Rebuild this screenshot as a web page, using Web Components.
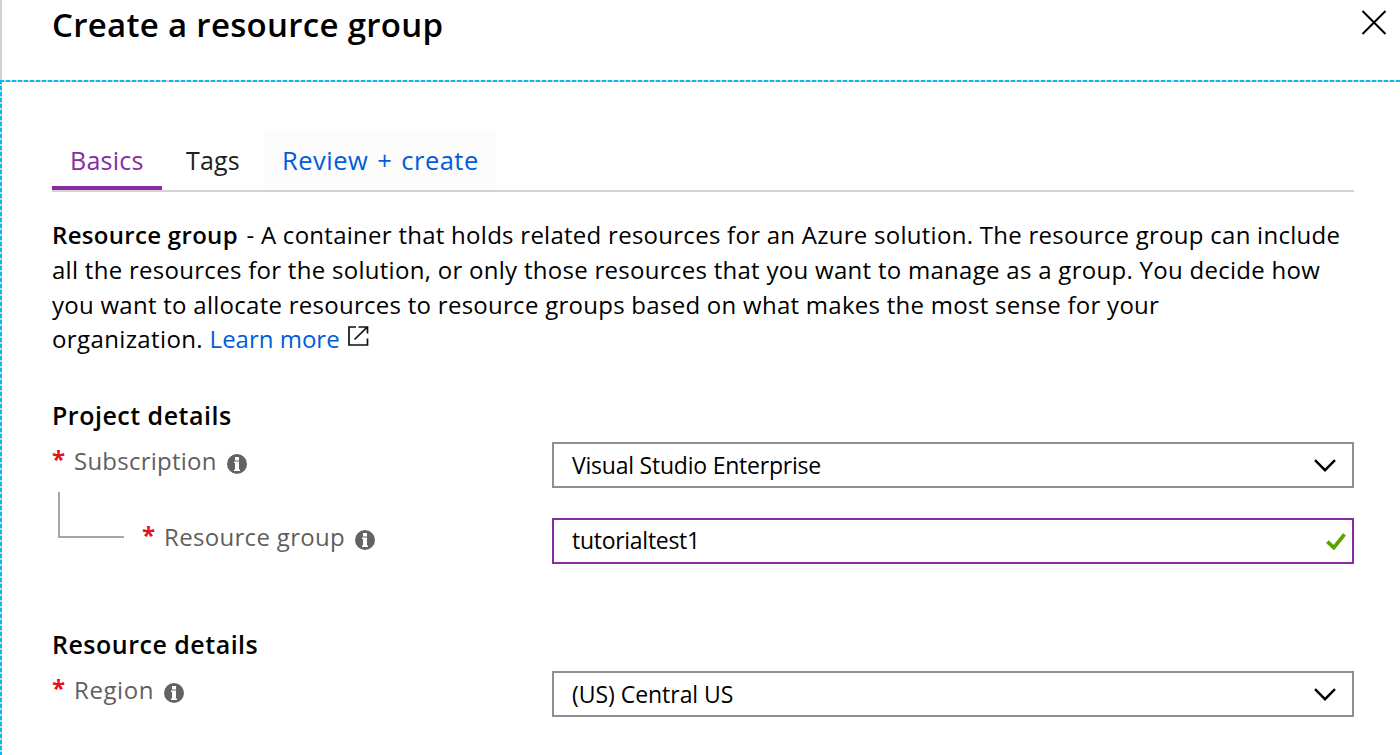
<!DOCTYPE html>
<html lang="en">
<head>
<meta charset="utf-8">
<title>Create a resource group</title>
<style>
html,body{margin:0;height:100%;overflow:hidden;background:#fff}
body{font-family:"Open Sans","Noto Sans",sans-serif;color:#000}
</style>
</head>
<body>
<rg-blade heading="Create a resource group">
  <rg-tabs>
    <rg-tab active style="width:110px;letter-spacing:.25px">Basics</rg-tab>
    <rg-tab style="width:90px;letter-spacing:.2px">Tags</rg-tab>
    <rg-tab highlight style="width:232px;font-size:25.5px;letter-spacing:.5px;word-spacing:1.8px">Review + create</rg-tab>
  </rg-tabs>
  <rg-intro></rg-intro>
  <rg-section heading="Project details">
    <rg-row label="Subscription" style="--ls:.24px"><rg-field icon="chevron" style="--ls:-.22px">Visual Studio Enterprise</rg-field></rg-row>
    <rg-row nested label="Resource group" style="--ls:.32px"><rg-field icon="check" focused style="--ls:-.28px">tutorialtest1</rg-field></rg-row>
  </rg-section>
  <rg-section heading="Resource details">
    <rg-row label="Region" style="--ls:.6px"><rg-field icon="chevron" style="--ls:-.04px">(US) Central US</rg-field></rg-row>
  </rg-section>
</rg-blade>
<script>
const define = (name, render) => customElements.define(name, class extends HTMLElement {
  connectedCallback() {
    if (this.shadowRoot) return;
    this.attachShadow({mode: 'open'}).innerHTML = render(this);
  }
});

define('rg-blade', el => `
<style>
:host{display:flex;flex-direction:column;height:100vh;box-sizing:border-box}
header{flex:none;height:80px;box-sizing:border-box;border-left:2px solid #d2d2d2;padding:0 13px 0 50px;display:flex;justify-content:space-between;align-items:flex-start}
h1{margin:0;font-size:33px;line-height:50px;font-weight:600;letter-spacing:.3px;white-space:nowrap}
svg{display:block;margin-top:10px}
main{flex:1;min-height:0;box-sizing:border-box;padding:50px 46px 0 52px;
background:repeating-linear-gradient(90deg,#00bcf2 0 4px,#d2d2d2 4px 6.018px) 0 0/100% 2px no-repeat,
repeating-linear-gradient(180deg,#00bcf2 0 4px,#d2d2d2 4px 6px) 0 0/2px 100% no-repeat,#fff}
</style>
<header><h1>${el.getAttribute('heading')}</h1>
<svg width="26" height="25" viewBox="0 0 26 25" fill="none" stroke="#000" stroke-width="2"><path d="M1.5 1 24.5 24M24.5 1 1.5 24"/></svg></header>
<main><slot></slot></main>`);

define('rg-tabs', () => `
<style>:host{display:flex;gap:6px;height:60px;border-bottom:2px solid #d2d2d2}</style><slot></slot>`);

define('rg-tab', () => `
<style>
:host{display:block;box-sizing:border-box;height:60px;padding-left:18px;font-size:25px;line-height:60px;color:#1f1f1f;white-space:nowrap}
:host([active]){color:#892ca3;border-bottom:4px solid #892ca3}
:host([highlight]){color:#015cda;background:#fcfcfc}
</style><slot></slot>`);

define('rg-intro', () => `
<style>
:host{display:block;margin-top:26.3px;height:179.4px;font-size:24px;line-height:34.67px;white-space:nowrap}
p{margin:0}
p span,b,a{letter-spacing:var(--s)}
b{font-weight:600}
a{color:#015cda;text-decoration:none}
svg{margin-left:8px;vertical-align:2px}
</style>
<p><b style="--s:.31px">Resource group</b><span style="--s:.268px;margin-left:2px"> - A container that holds related resources for an Azure solution. The resource group can include</span></p>
<p><span style="--s:.285px">all the resources for the solution, or only those resources that you want to manage as a group. You decide how</span></p>
<p><span style="--s:.27px">you want to allocate resources to resource groups based on what makes the most sense for your</span></p>
<p><span style="--s:.38px">organization. </span><a href="#" style="--s:0px">Learn more</a><svg width="21" height="20" viewBox="0 0 21 20" fill="none" stroke="#111" stroke-width="1.7"><path d="M8 1H1V19H19.5V12.5M10.5 1H19.5V7.5M6.5 13.5 19.2 1.2"/></svg></p>`);

define('rg-section', el => `
<style>
:host{display:block}
:host(:not(:last-child)){height:229px}
h2{margin:0 0 10.6px;font-size:25px;line-height:34px;font-weight:600;letter-spacing:.5px}
.rows{display:grid;gap:30px}
</style>
<h2>${el.getAttribute('heading')}</h2><div class="rows"><slot></slot></div>`);

define('rg-row', el => `
<style>
:host{display:grid;grid-template-columns:500px 1fr;height:46px}
.label{display:flex;align-items:flex-start;font-size:24px;line-height:37px;color:#5f5f5f;white-space:nowrap}
.star{flex:none;width:22px;margin-top:-2px;color:#e81123;font-weight:700}
.name{letter-spacing:var(--ls)}
svg{flex:none;margin:12px 0 0 10px}
.branch{flex:none;width:64px;height:44px;margin:-26px 18px 0 6px;border:solid #a6a6a6;border-width:0 0 2px 2px}
</style>
<div class="label">${el.hasAttribute('nested') ? '<span class="branch"></span>' : ''}<span class="star">*</span><span class="name">${el.getAttribute('label')}</span>
<svg width="20" height="20" viewBox="0 0 20 20"><circle cx="10" cy="10" r="10" fill="#636363"/><path fill="#fff" d="M8 3h4v3.4H8zM7 7.6h5v7.9h1v1.5H7v-1.5h1V9.1H7z"/></svg></div>
<slot></slot>`);

const fieldIcons = {
  chevron: '<svg style="margin-right:16px" width="22" height="14" viewBox="0 0 22 14" fill="none" stroke="#000" stroke-width="2.4"><path d="M1 2.2 11 12.2 21 2.2"/></svg>',
  check: '<svg style="margin-right:6px" width="20" height="17" viewBox="0 0 20 17" fill="none" stroke="#57a300" stroke-width="3.8"><path d="M1.4 8.6 7.8 14.6 18.5 1.4"/></svg>'
};
define('rg-field', el => `
<style>
:host{display:flex;align-items:center;justify-content:space-between;box-sizing:border-box;height:46px;padding-left:18px;border:2px solid #8f8f8f;font-size:23px;line-height:42px;letter-spacing:var(--ls);white-space:nowrap}
:host([focused]){border-color:#892ca3}
:host([focused]) span{margin-top:-2px}
svg{flex:none}
</style>
<span><slot></slot></span>${fieldIcons[el.getAttribute('icon')]}`);
</script>
</body>
</html>
